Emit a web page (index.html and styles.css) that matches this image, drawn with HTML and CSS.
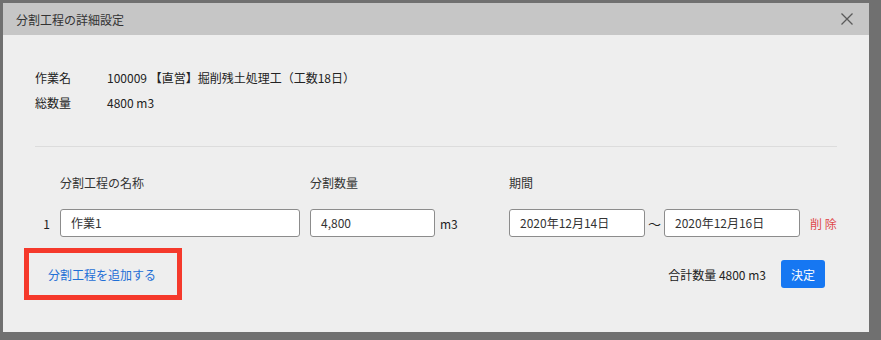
FILE: index.html
```html
<!DOCTYPE html>
<html lang="ja">
<head>
<meta charset="utf-8">
<title>分割工程の詳細設定</title>
<link rel="stylesheet" href="styles.css">
</head>
<body>
<div class="modal">
  <div class="modal-header">
    <span class="modal-title">分割工程の詳細設定</span>
    <svg class="close" width="12" height="12" viewBox="0 0 12 12"><path d="M0.5 0.5 L11.5 11.5 M11.5 0.5 L0.5 11.5" stroke="#5a5a5a" stroke-width="1.3" fill="none"/></svg>
  </div>
  <div class="modal-body">
    <div class="info">
      <div class="info-row"><span class="info-key">作業名</span><span>100009 【直営】掘削残土処理工（工数18日）</span></div>
      <div class="info-row"><span class="info-key">総数量</span><span>4800 m3</span></div>
    </div>
    <hr class="divider">
    <div class="labels">
      <span class="lbl-name">分割工程の名称</span>
      <span class="lbl-qty">分割数量</span>
      <span class="lbl-period">期間</span>
    </div>
    <div class="row">
      <span class="num">1</span>
      <div class="field f-name">作業1</div>
      <div class="field f-qty">4,800</div>
      <span class="unit">m3</span>
      <div class="field f-date">2020年12月14日</div>
      <span class="tilde">〜</span>
      <div class="field f-date">2020年12月16日</div>
      <span class="del">削 除</span>
    </div>
    <div class="footer">
      <div class="annot"><a class="add">分割工程を追加する</a></div>
      <div class="total">合計数量 4800 m3</div>
      <button class="ok">決定</button>
    </div>
  </div>
</div>
</body>
</html>
```

FILE: styles.css
```css
html, body {
  margin: 0;
  padding: 0;
}
body {
  background: #707070;
  font-family: "Noto Sans CJK JP", "Noto Sans", sans-serif;
  font-size: 12px;
  color: #222;
  width: 881px;
  height: 340px;
  overflow: hidden;
}
.modal {
  margin: 3px 0 0 3px;
  width: 866px;
  background: #eeeeee;
  display: flex;
  flex-direction: column;
}
.modal-header {
  height: 32px;
  background: #c6c6c6;
  display: flex;
  align-items: center;
  justify-content: space-between;
  padding: 0 16px 0 13px;
}
.modal-title {
  font-size: 12px;
  color: #333;
}
.close {
  display: block;
}
.modal-body {
  padding: 30px 32px 32px 32px;
}
.info-row {
  display: flex;
  height: 25px;
  line-height: 25px;
}
.info-key {
  width: 72px;
}
.divider {
  border: none;
  border-top: 1px solid #dcdcdc;
  margin: 31px 0 0 0;
}
.labels {
  display: flex;
  margin-top: 27px;
  line-height: 18px;
  color: #333;
  padding-left: 25px;
}
.lbl-name { width: 250px; }
.lbl-qty { width: 199px; }
.row {
  display: flex;
  align-items: center;
  margin-top: 17px;
  height: 28px;
}
.num {
  width: 25px;
  text-align: right;
  padding-right: 10px;
  box-sizing: border-box;
}
.field {
  height: 28px;
  box-sizing: border-box;
  border: 1px solid #8c8c8c;
  border-radius: 3px;
  background: #fff;
  line-height: 26px;
  padding-left: 10px;
  color: #333;
}
.f-name { width: 240px; margin-right: 10px; }
.f-qty { width: 125px; }
.unit { width: 74px; padding-left: 5px; box-sizing: border-box; }
.f-date { width: 136px; }
.tilde { width: 19px; text-align: center; font-size: 13px; }
.del {
  color: #e0474a;
  margin-left: 10px;
}
.footer {
  display: flex;
  align-items: center;
  margin-top: 11px;
  padding-right: 12px;
}
.annot {
  margin-left: -11px;
  width: 158px;
  height: 52px;
  box-sizing: border-box;
  border: 5px solid #f5392b;
  display: flex;
  align-items: center;
  padding-left: 19px;
}
.add {
  color: #1f6fd6;
  cursor: pointer;
}
.total {
  margin-left: auto;
  margin-right: 15px;
}
.ok {
  width: 44px;
  height: 28px;
  border: none;
  border-radius: 3px;
  background: #1677f2;
  color: #fff;
  font-family: inherit;
  font-size: 12px;
  padding: 0;
}
```
